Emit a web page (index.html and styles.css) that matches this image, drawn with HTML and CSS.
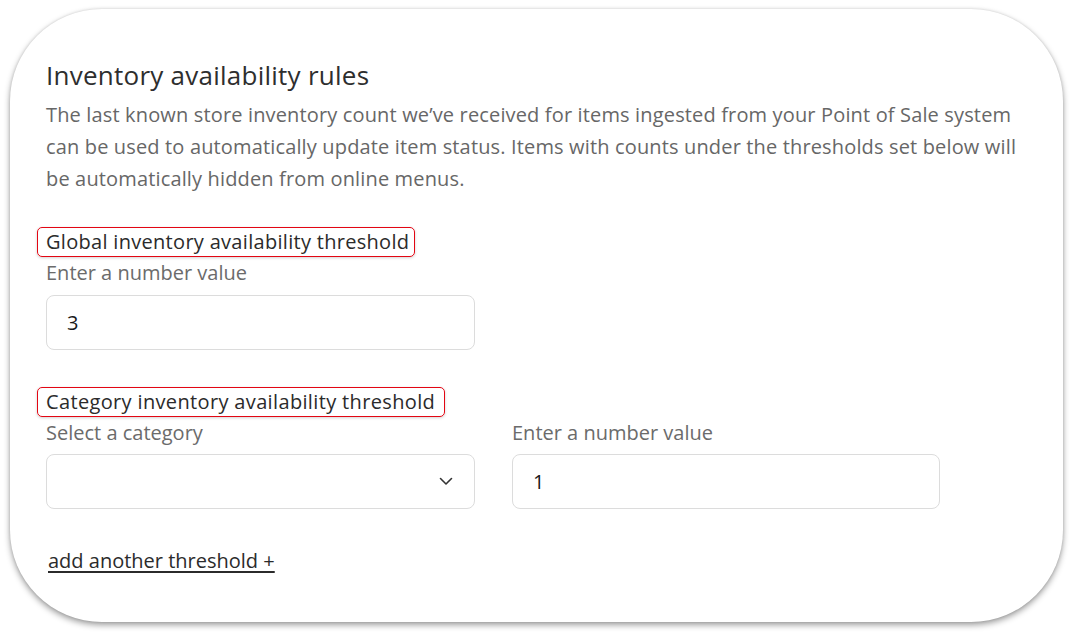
FILE: index.html
```html
<!DOCTYPE html>
<html lang="en">
<head>
<meta charset="utf-8">
<title>Inventory availability rules</title>
<link rel="stylesheet" href="styles.css">
</head>
<body>
<div class="page">
  <section class="card">
    <h1 class="title">Inventory availability rules</h1>
    <p class="desc">The last known store inventory count we’ve received for items ingested from your Point of Sale system can be used to automatically update item status. Items with counts under the thresholds set below will be automatically hidden from online menus.</p>

    <div class="group global">
      <div class="label-wrap"><span class="group-label">Global inventory availability threshold</span></div>
      <div class="field">
        <div class="field-label">Enter a number value</div>
        <div class="input">3</div>
      </div>
    </div>

    <div class="group category">
      <div class="label-wrap"><span class="group-label">Category inventory availability threshold</span></div>
      <div class="row">
        <div class="field">
          <div class="field-label">Select a category</div>
          <div class="input select">
            <span></span>
            <svg class="chev" width="14" height="9" viewBox="0 0 14 9"><path d="M1.5 1.5 L7 7 L12.5 1.5" fill="none" stroke="#333" stroke-width="1.6" stroke-linecap="round" stroke-linejoin="round"/></svg>
          </div>
        </div>
        <div class="field">
          <div class="field-label">Enter a number value</div>
          <div class="input">1</div>
        </div>
      </div>
    </div>

    <a class="add-link" href="#">add another threshold +</a>
  </section>
</div>
</body>
</html>
```
FILE: styles.css
```css
* { box-sizing: border-box; }
html, body { margin: 0; padding: 0; background: #ffffff; }
body { font-family: "Open Sans", "Noto Sans", "Liberation Sans", sans-serif; }
.page { padding: 9px 8px 11px 10px; }
.card {
  width: 1053px;
  height: 613px;
  background: #fff;
  border-radius: 92px;
  box-shadow: 0 3px 6px rgba(0,0,0,0.38), 0 0 3px rgba(0,0,0,0.12);
  padding: 50px 36px 0 36px;
}
.title {
  margin: 0;
  font-size: 26px;
  line-height: 32px;
  font-weight: 400;
  letter-spacing: 0.25px;
  color: #2e2e2e;
}
.desc {
  margin: 8px 0 0;
  font-size: 20px;
  line-height: 32px;
  letter-spacing: 0.15px;
  color: #676767;
  max-width: 990px;
}
.group.global { margin-top: 32px; }
.group.category { margin-top: 37px; }
.label-wrap { display: flex; }
.group-label {
  display: inline-block;
  margin-left: -9px;
  padding: 0 5px 0 8px;
  border: 1.5px solid #e30613;
  border-radius: 5px;
  font-size: 20px;
  line-height: 28px;
  font-weight: 500;
  letter-spacing: 0.3px;
  color: #2b2b2b;
  box-shadow: 0 1px 3px rgba(0,0,0,0.18);
}
.category .group-label { padding-right: 9px; letter-spacing: 0.35px; }
.field-label {
  font-size: 20px;
  line-height: 24px;
  color: #6b6b6b;
  margin-top: 4px;
}
.input {
  margin-top: 10px;
  width: 429px;
  height: 55px;
  border: 1px solid #dcdcdc;
  border-radius: 8px;
  display: flex;
  align-items: center;
  padding: 0 20px;
  font-size: 20px;
  color: #1a1a1a;
}
.category .input { margin-top: 9px; }
.select { justify-content: space-between; padding-right: 21px; }
.row { display: flex; gap: 37px; }
.row .field:last-child .input { width: 428px; }
.add-link {
  display: inline-block;
  margin-top: 40px;
  margin-left: 2px;
  font-size: 20px;
  line-height: 24px;
  font-weight: 500;
  color: #2b2b2b;
  text-decoration: underline;
  text-underline-offset: 3px;
}
```
